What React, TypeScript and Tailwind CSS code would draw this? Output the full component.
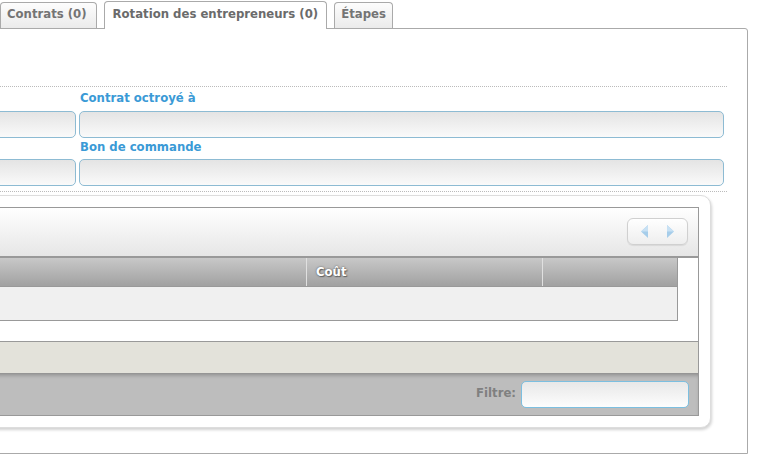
import React from "react";

const font = { fontFamily: '"DejaVu Sans", Verdana, sans-serif' };

function Tab({ label, active, pad = "px-[8px]" }: { label: string; active?: boolean; pad?: string }) {
  if (active) {
    return (
      <div className={`relative z-10 -mb-px h-[28px] rounded-t-[4px] border border-b-0 border-[#aaaaaa] bg-white ${pad} pt-[4px] text-[11.7px] font-bold text-[#6b6b6b]`}>
        {label}
      </div>
    );
  }
  return (
    <div className={`h-[26px] rounded-t-[4px] border border-b-0 border-[#aaaaaa] bg-gradient-to-b from-[#fdfdfd] to-[#ebebeb] ${pad} pt-[3px] text-[11.7px] font-bold text-[#747474]`}>
      {label}
    </div>
  );
}

function Field() {
  return (
    <div className="h-[27px] rounded-[5px] border border-[#8dbbd3] bg-gradient-to-b from-[#e4e4e4] to-[#fafafa]" />
  );
}

function Label({ text }: { text: string }) {
  return <div className="h-[18px] pl-[1px] text-[11.7px] font-bold leading-[18px] text-[#3a9ad6]">{text}</div>;
}

export default function App() {
  return (
    <div className="relative h-[460px] w-[764px] overflow-hidden bg-white" style={font}>
      {/* tab strip */}
      <div className="flex h-[28px] items-end gap-[7px]">
        <Tab label="Contrats (0)" pad="pl-[6px] pr-[9px]" />
        <Tab label="Rotation des entrepreneurs (0)" active />
        <Tab label="Étapes" pad="px-[6px]" />
      </div>

      {/* tab body */}
      <div className="ml-[-30px] h-[426px] w-[778px] rounded-tr-[3px] border border-[#aaaaaa] pr-[20px] pt-[57px]">
        <div className="border-t border-dotted border-[#bbbbbb]" />
        <div className="pr-[3px]">
          <div className="flex gap-[3px]">
            <div className="w-[105px]">
              <div className="h-[24px]" />
              <Field />
            </div>
            <div className="flex-1">
              <div className="h-[24px] pt-[2px]">
                <Label text="Contrat octroyé à" />
              </div>
              <Field />
            </div>
          </div>
          <div className="flex gap-[3px]">
            <div className="w-[105px]">
              <div className="h-[21px]" />
              <Field />
            </div>
            <div className="flex-1">
              <div className="h-[21px]">
                <Label text="Bon de commande" />
              </div>
              <Field />
            </div>
          </div>
        </div>
        <div className="mt-[5px] border-t border-dotted border-[#bbbbbb]" />

        {/* grid widget */}
        <div className="mt-[3px] mr-[16px] h-[233px] rounded-b-[10px] rounded-tr-[10px] border border-[#dddddd] bg-white pb-[11px] pr-[11px] pt-[11px] shadow-[1px_2px_3px_rgba(0,0,0,0.18)]">
          <div className="flex h-full flex-col border border-[#999999]">
            {/* toolbar */}
            <div className="flex h-[50px] shrink-0 items-center justify-end border-b-2 border-[#999999] bg-gradient-to-b from-[#ffffff] to-[#e6e6e6] pr-[10px]">
              <div className="mt-[-1px] flex h-[27px] w-[61px] items-center justify-between rounded-[6px] border border-[#d0d0d0] bg-gradient-to-b from-[#ffffff] to-[#eeeeee] px-[13px] shadow-[0_1px_1px_rgba(0,0,0,0.08)]">
                <svg width="7" height="13" viewBox="0 0 7 13">
                  <path d="M7 0 L0 6.5 L7 13 Z" fill="#a6cdea" />
                  <path d="M7 0 L0 6.5 L7 6.5 Z" fill="#c8e1f4" />
                </svg>
                <svg width="7" height="13" viewBox="0 0 7 13">
                  <path d="M0 0 L7 6.5 L0 13 Z" fill="#a6cdea" />
                  <path d="M0 0 L7 6.5 L0 6.5 Z" fill="#c8e1f4" />
                </svg>
              </div>
            </div>
            {/* table */}
            <div className="mr-[20px] shrink-0 border-r border-[#999999]">
              <div className="flex h-[29px] border-b border-[#999999] bg-gradient-to-b from-[#c8c8c8] to-[#a1a1a1]">
                <div className="w-[334px] border-r border-[#e0e0e0]" />
                <div
                  className="w-[236px] border-r border-[#e0e0e0] pl-[9px] pt-[6px] text-[11.7px] font-bold text-white"
                  style={{ textShadow: "0 0 2px #555, 1px 1px 1px #666" }}
                >
                  Coût
                </div>
                <div className="flex-1" />
              </div>
              <div className="h-[34px] border-b border-[#999999] bg-[#f0f0f0]" />
            </div>
            <div className="h-[20px] shrink-0" />
            <div className="h-[32px] shrink-0 border-t border-[#999999] bg-[#e3e2da]" />
            {/* footer with filter */}
            <div className="flex flex-1 items-center justify-end bg-[#bdbdbd] pr-[9px] shadow-[inset_0_4px_4px_-2px_rgba(0,0,0,0.28)]">
              <span className="mr-[5px] text-[11.7px] font-bold text-[#808080]">Filtre:</span>
              <div className="h-[27px] w-[168px] rounded-[5px] border border-[#7cbfe0] bg-gradient-to-b from-[#e8e8e8] to-[#fdfdfd]" />
            </div>
          </div>
        </div>
      </div>
    </div>
  );
}
